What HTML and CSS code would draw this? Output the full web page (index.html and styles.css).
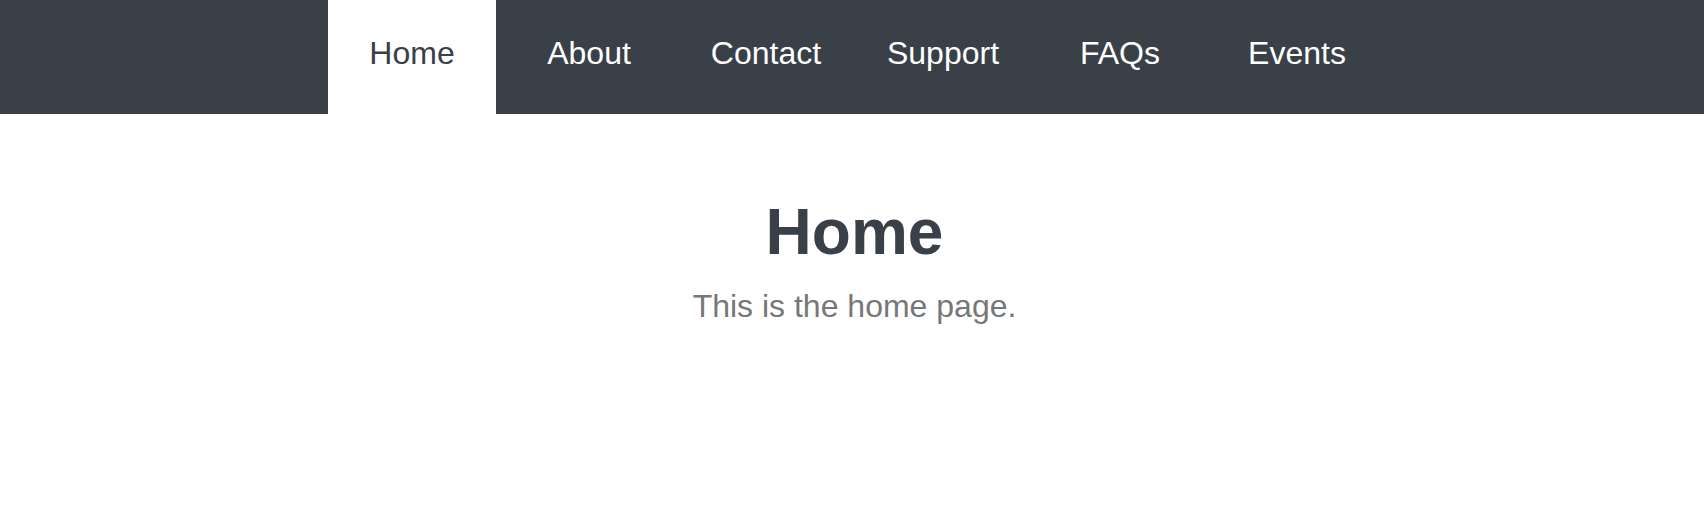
FILE: index.html
```html
<!DOCTYPE html>
<html lang="en">
<head>
<meta charset="utf-8">
<title>Home</title>
<link rel="stylesheet" href="styles.css">
</head>
<body>
<nav class="topnav">
  <ul class="tabs">
    <li class="tab active">Home</li>
    <li class="tab">About</li>
    <li class="tab">Contact</li>
    <li class="tab">Support</li>
    <li class="tab">FAQs</li>
    <li class="tab">Events</li>
  </ul>
</nav>
<main class="content">
  <h1 class="title">Home</h1>
  <p class="lead">This is the home page.</p>
</main>
</body>
</html>
```
FILE: styles.css
```css
html, body {
  margin: 0;
  padding: 0;
  background: #ffffff;
  font-family: "Liberation Sans", Arial, Helvetica, sans-serif;
}

.topnav {
  background: #394048;
  height: 114px;
}

.tabs {
  list-style: none;
  margin: 0;
  padding: 0 0 0 328px;
  display: flex;
  gap: 9px;
  height: 114px;
}

.tab {
  width: 168px;
  box-sizing: border-box;
  padding-top: 33px;
  line-height: 40px;
  font-size: 32px;
  text-align: center;
  color: #ffffff;
}

.tab.active {
  background: #ffffff;
  color: #394048;
}

.content {
  text-align: center;
  padding-left: 5px;
}

.title {
  margin: 81px 0 0;
  font-size: 64px;
  line-height: 74px;
  font-weight: bold;
  color: #394048;
}

.lead {
  margin: 19px 0 0;
  font-size: 32px;
  line-height: 37px;
  color: #777777;
}
```
